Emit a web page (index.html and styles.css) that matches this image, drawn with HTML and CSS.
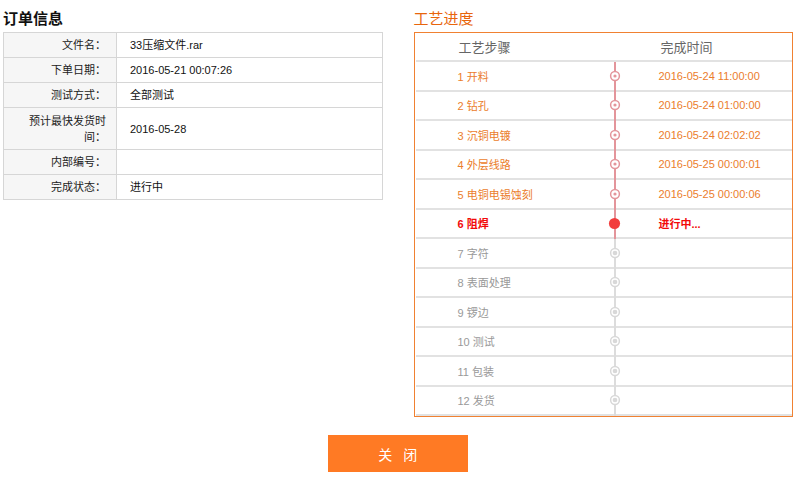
FILE: index.html
```html
<!DOCTYPE html>
<html lang="zh-CN">
<head>
  <meta charset="UTF-8">
  <meta name="viewport" content="width=device-width, initial-scale=1.0">
  <title>订单详情</title>
  <link rel="stylesheet" href="styles.css">
</head>
<body>
  <div class="page">
    <div class="columns">
      <section class="order">
        <h3 class="title">订单信息</h3>
        <table class="info">
          <tr><th>文件名：</th><td>33压缩文件.rar</td></tr>
          <tr><th>下单日期：</th><td>2016-05-21 00:07:26</td></tr>
          <tr><th>测试方式：</th><td>全部测试</td></tr>
          <tr class="tall"><th>预计最快发货时间：</th><td>2016-05-28</td></tr>
          <tr><th>内部编号：</th><td></td></tr>
          <tr><th>完成状态：</th><td>进行中</td></tr>
        </table>
      </section>

      <section class="progress">
        <h3 class="title title-orange">工艺进度</h3>
        <div class="steps">
          <div class="steps-head">
            <span class="col-step">工艺步骤</span>
            <span></span>
            <span class="col-time">完成时间</span>
          </div>

          <!-- finished steps -->
          <div class="step done">
            <span class="col-step">1 开料</span>
            <span class="node"><svg class="ring" viewBox="0 0 12 12"><circle cx="6" cy="6" r="4.4" /><circle class="core" cx="6" cy="6" r="1.6" /></svg></span>
            <span class="col-time">2016-05-24 11:00:00</span>
          </div>
          <div class="step done">
            <span class="col-step">2 钻孔</span>
            <span class="node"><svg class="ring" viewBox="0 0 12 12"><circle cx="6" cy="6" r="4.4" /><circle class="core" cx="6" cy="6" r="1.6" /></svg></span>
            <span class="col-time">2016-05-24 01:00:00</span>
          </div>
          <div class="step done">
            <span class="col-step">3 沉铜电镀</span>
            <span class="node"><svg class="ring" viewBox="0 0 12 12"><circle cx="6" cy="6" r="4.4" /><circle class="core" cx="6" cy="6" r="1.6" /></svg></span>
            <span class="col-time">2016-05-24 02:02:02</span>
          </div>
          <div class="step done">
            <span class="col-step">4 外层线路</span>
            <span class="node"><svg class="ring" viewBox="0 0 12 12"><circle cx="6" cy="6" r="4.4" /><circle class="core" cx="6" cy="6" r="1.6" /></svg></span>
            <span class="col-time">2016-05-25 00:00:01</span>
          </div>
          <div class="step done">
            <span class="col-step">5 电铜电锡蚀刻</span>
            <span class="node"><svg class="ring" viewBox="0 0 12 12"><circle cx="6" cy="6" r="4.4" /><circle class="core" cx="6" cy="6" r="1.6" /></svg></span>
            <span class="col-time">2016-05-25 00:00:06</span>
          </div>

          <!-- current step -->
          <div class="step current">
            <span class="col-step">6 阻焊</span>
            <span class="node"><svg class="fill" viewBox="0 0 14 14"><circle cx="7" cy="7" r="6" /></svg></span>
            <span class="col-time">进行中...</span>
          </div>

          <!-- pending steps -->
          <div class="step todo">
            <span class="col-step">7 字符</span>
            <span class="node"><svg class="ring" viewBox="0 0 12 12"><circle cx="6" cy="6" r="4.4" /><circle class="core" cx="6" cy="6" r="1.6" /></svg></span>
            <span class="col-time"></span>
          </div>
          <div class="step todo">
            <span class="col-step">8 表面处理</span>
            <span class="node"><svg class="ring" viewBox="0 0 12 12"><circle cx="6" cy="6" r="4.4" /><circle class="core" cx="6" cy="6" r="1.6" /></svg></span>
            <span class="col-time"></span>
          </div>
          <div class="step todo">
            <span class="col-step">9 锣边</span>
            <span class="node"><svg class="ring" viewBox="0 0 12 12"><circle cx="6" cy="6" r="4.4" /><circle class="core" cx="6" cy="6" r="1.6" /></svg></span>
            <span class="col-time"></span>
          </div>
          <div class="step todo">
            <span class="col-step">10 测试</span>
            <span class="node"><svg class="ring" viewBox="0 0 12 12"><circle cx="6" cy="6" r="4.4" /><circle class="core" cx="6" cy="6" r="1.6" /></svg></span>
            <span class="col-time"></span>
          </div>
          <div class="step todo">
            <span class="col-step">11 包装</span>
            <span class="node"><svg class="ring" viewBox="0 0 12 12"><circle cx="6" cy="6" r="4.4" /><circle class="core" cx="6" cy="6" r="1.6" /></svg></span>
            <span class="col-time"></span>
          </div>
          <div class="step todo">
            <span class="col-step">12 发货</span>
            <span class="node"><svg class="ring" viewBox="0 0 12 12"><circle cx="6" cy="6" r="4.4" /><circle class="core" cx="6" cy="6" r="1.6" /></svg></span>
            <span class="col-time"></span>
          </div>
        </div>
      </section>
    </div>

    <div class="actions">
      <button class="close-btn">关 闭</button>
    </div>
  </div>
</body>
</html>
```

FILE: styles.css
```css
body {
  margin: 0;
  font-family: "Liberation Sans", "Noto Sans CJK SC", sans-serif;
  font-size: 11px;
  color: #333;
  background-color: #fff;
}

.page {
  padding: 0 7px 0 3px;
}

.columns {
  display: flex;
  gap: 31px;
}

.order {
  width: 380px;
}

.progress {
  width: 380px;
}

.title {
  margin: 0;
  padding-top: 9px;
  height: 23px;
  line-height: 20px;
  font-size: 15px;
  font-weight: bold;
  color: #111;
}

.title-orange {
  font-weight: normal;
  color: #e8650c; /* orange heading */
}

/* Order info table */
.info {
  width: 100%;
  border-collapse: collapse;
}

.info th,
.info td {
  border: 1px solid #d6d6d6;
  line-height: 16px;
  font-weight: normal;
  vertical-align: middle;
}

.info th {
  width: 82px;
  padding: 4px 10px 4px 20px;
  text-align: right;
  background-color: #f6f6f6;
  color: #222;
}

.info td {
  padding: 4px 0 4px 13px;
  color: #111;
}

.info .tall th,
.info .tall td {
  padding-top: 4.5px;
  padding-bottom: 4.5px;
}

/* Process progress */
.steps {
  border: 1px solid #f08132;
  padding-left: 1px;
}

.steps-head,
.step {
  display: grid;
  grid-template-columns: 192px 14px 1fr;
  align-items: center;
}

.steps-head {
  height: 27px;
  border-bottom: 2px solid #e2e2e2;
  font-size: 13px;
  color: #666;
}

.step {
  height: 27.5px;
  border-bottom: 2px solid #e2e2e2;
}

.col-step {
  padding-left: 42px;
}

.col-time {
  padding-left: 37px;
}

.steps-head .col-step {
  padding-left: 43px;
}

.steps-head .col-time {
  padding-left: 39px;
}

.node {
  align-self: stretch;
  position: relative;
  display: flex;
  align-items: center;
  justify-content: center;
}

/* vertical timeline segment, runs through the row separator */
.node::before {
  content: "";
  position: absolute;
  left: 6px;
  top: 0;
  bottom: -2px;
  width: 2px;
  background-color: #e3959b;
}

.node svg {
  position: relative;
  display: block;
}

.ring {
  width: 12px;
  height: 12px;
}

.ring circle {
  fill: #fff;
  stroke: #e3959b;
  stroke-width: 1.5;
}

.ring .core {
  fill: #e3959b;
  stroke: none;
}

.fill {
  width: 13px;
  height: 13px;
}

.fill circle {
  fill: #f23d3d;
}

.done {
  color: #eb7d2c;
}

.current {
  color: #f20a0a;
  font-weight: bold;
}

.todo {
  color: #999;
}

.todo .node::before {
  background-color: #dcdcdc;
}

.todo .ring circle {
  stroke: #d8d8d8;
}

.todo .ring .core {
  fill: #d8d8d8;
}

/* Close button */
.actions {
  display: flex;
  justify-content: center;
  margin-top: 18px;
}

.close-btn {
  width: 140px;
  height: 37px;
  padding: 0 0 0 3px;
  background-color: #ff7a24;
  border: none;
  color: #fff;
  font-family: inherit;
  font-size: 14px;
  letter-spacing: 3.5px;
  cursor: pointer;
}
```
